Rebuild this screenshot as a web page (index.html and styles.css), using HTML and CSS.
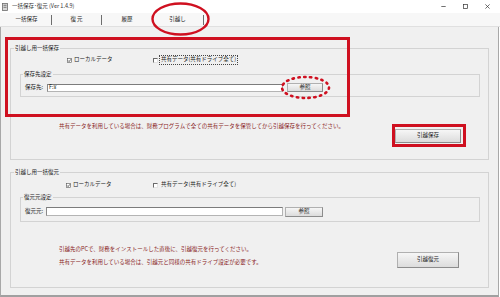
FILE: index.html
```html
<!DOCTYPE html>
<html lang="ja">
<head>
<meta charset="utf-8">
<title>一括保存･復元</title>
<link rel="stylesheet" href="styles.css">
</head>
<body>
<div class="window">
  <div class="titlebar">
    <svg class="appicon" viewBox="0 0 6 8"><rect x="0.5" y="0.5" width="5" height="7" fill="#d8d8d8" stroke="#6d6d6d" stroke-width="0.8"/><rect x="1.5" y="1.8" width="3" height="1" fill="#7a7a7a"/><rect x="1.5" y="3.8" width="3" height="1" fill="#7a7a7a"/></svg>
    <span class="title">一括保存･復元 (Ver 1.4.9)</span>
    <div class="controls">
      <span class="ctl"><svg class="ctl-icon" viewBox="0 0 5 5"><path d="M0.3 2.5H4.7" stroke="#333" stroke-width="0.7"/></svg></span>
      <span class="ctl"><svg class="ctl-icon" viewBox="0 0 5 5"><rect x="0.5" y="0.5" width="4" height="4" fill="none" stroke="#333" stroke-width="0.7"/></svg></span>
      <span class="ctl"><svg class="ctl-icon" viewBox="0 0 5 5"><path d="M0.4 0.4L4.6 4.6M4.6 0.4L0.4 4.6" stroke="#333" stroke-width="0.7"/></svg></span>
    </div>
  </div>
  <div class="tabs">
    <div class="tab tab-sep">一括保存</div>
    <div class="tab tab-sep">復&nbsp;元</div>
    <div class="tab">履歴</div>
    <div class="tab tab-sep tab-active">引越し</div>
  </div>
  <div class="content">
    <fieldset class="group group-save">
      <legend>引越し用一括保存</legend>
      <div class="checks">
        <span class="check check-local"><svg class="box" viewBox="0 0 5 5"><rect x="0.4" y="0.4" width="4.2" height="4.2" fill="#fff" stroke="#555" stroke-width="0.6"/><path d="M1.1 2.5L2.1 3.6L3.9 1.3" fill="none" stroke="#222" stroke-width="0.7"/></svg>ローカルデータ</span>
        <span class="check"><span class="box box-empty"></span><span class="focus">共有データ(共有ドライブ全て)</span></span>
      </div>
      <fieldset class="sub sub-save">
        <legend>保存先設定</legend>
        <div class="pathrow path-save">
          <span class="plabel">保存先:</span>
          <span class="input">F:¥</span>
          <span class="btn btn-ref">参照</span>
        </div>
      </fieldset>
      <div class="action action-save">
        <div class="notes notes-save">共有データを利用している場合は、財務プログラムで全ての共有データを保管してから引越保存を行ってください。</div>
        <span class="btn btn-save">引越保存</span>
      </div>
    </fieldset>

    <fieldset class="group group-restore">
      <legend>引越し用一括復元</legend>
      <div class="checks checks-restore">
        <span class="check check-local"><svg class="box" viewBox="0 0 5 5"><rect x="0.4" y="0.4" width="4.2" height="4.2" fill="#fff" stroke="#555" stroke-width="0.6"/><path d="M1.1 2.5L2.1 3.6L3.9 1.3" fill="none" stroke="#222" stroke-width="0.7"/></svg>ローカルデータ</span>
        <span class="check"><span class="box box-empty"></span><span class="nofocus">共有データ(共有ドライブ全て)</span></span>
      </div>
      <fieldset class="sub sub-restore">
        <legend>復元元設定</legend>
        <div class="pathrow path-restore">
          <span class="plabel">復元元:</span>
          <span class="input input-restore"></span>
          <span class="btn btn-ref btn-ref2">参照</span>
        </div>
      </fieldset>
      <div class="action action-restore">
        <div class="notes notes-restore">
          <p class="note-line">引越先のPCで、財務をインストールした直後に、引越復元を行ってください。</p>
          <p class="note-line">共有データを利用している場合は、引越元と同様の共有ドライブ設定が必要です。</p>
        </div>
        <span class="btn btn-restore">引越復元</span>
      </div>
    </fieldset>
  </div>

  <svg class="marks" viewBox="0 0 500 297">
    <ellipse cx="180.5" cy="19" rx="28" ry="15.5" fill="none" stroke="#cf1020" stroke-width="2.4"/>
    <rect x="6.5" y="38.5" width="342" height="77" fill="none" stroke="#cf1020" stroke-width="3"/>
    <ellipse cx="305.5" cy="87.5" rx="23.5" ry="10.5" fill="none" stroke="#cf1020" stroke-width="2.6" stroke-dasharray="1.4 4.4" stroke-linecap="round"/>
    <rect x="393.5" y="125.5" width="71" height="20" fill="none" stroke="#cf1020" stroke-width="3"/>
  </svg>
</div>
</body>
</html>
```
FILE: styles.css
```css
* { box-sizing: border-box; }
html, body { margin: 0; padding: 0; }
body {
  width: 500px;
  height: 297px;
  overflow: hidden;
  background: #fff;
  font-family: "Noto Sans CJK JP", "Noto Sans", sans-serif;
  font-size: 5.5px;
  line-height: 1;
  color: #222;
}
.window {
  position: relative;
  width: 500px;
  height: 297px;
  display: flex;
  flex-direction: column;
}
.titlebar {
  height: 13px;
  flex: none;
  display: flex;
  align-items: center;
  background: #fff;
  padding-left: 2px;
}
.appicon { width: 6px; height: 8px; display: block; }
.title { margin-left: 4px; color: #333; }
.controls { margin-left: auto; margin-right: 2px; display: flex; }
.ctl {
  width: 22px;
  height: 13px;
  display: flex;
  align-items: center;
  justify-content: center;
}
.ctl-icon { width: 5px; height: 5px; display: block; }

.tabs {
  height: 14px;
  flex: none;
  display: flex;
  align-items: center;
  padding-left: 2px;
  background: #f7f7f7;
  border-bottom: 1px solid #e0e0e0;
}
.tab {
  width: 50px;
  height: 10px;
  display: flex;
  align-items: center;
  justify-content: center;
  color: #222;
  white-space: pre;
}
.tab-sep { border-right: 1px solid #6e6e6e; }
.tab-active { width: 52px; }

.content {
  flex: 1;
  background: #f0f0f0;
  border-left: 1px solid #a8a8a8;
  border-right: 1px solid #a8a8a8;
  border-bottom: 2px solid #a0a0a0;
  margin-right: 1px;
  padding: 18px 0 0 9px;
}

.group {
  margin: 0;
  width: 479px;
  min-width: 0;
  border: 1px solid #d3d3d3;
  padding: 0 7px 16px 9px;
}
.group legend {
  margin-left: -6px;
  padding: 0 1px;
  height: 6px;
  line-height: 6px;
  color: #222;
}
.group-restore { margin-top: 9px; padding-bottom: 18px; }

.checks {
  display: flex;
  align-items: center;
  height: 8px;
  margin-top: 5px;
  padding-left: 47px;
}
.checks-restore { margin-top: 6px; padding-left: 46px; }
.check { display: flex; align-items: center; gap: 2px; white-space: nowrap; }
.check-local { width: 86px; }
.checks-restore .check-local { width: 87px; }
.box { width: 5px; height: 5px; display: block; flex: none; }
.box-empty {
  background: #fff;
  border-top: 1px solid #6a6a6a;
  border-left: 1px solid #6a6a6a;
  border-bottom: 1px solid #e4e4e4;
  border-right: 1px solid #e4e4e4;
}
.focus {
  outline: 1px dotted #444;
  padding: 1px 1px;
}
.nofocus { padding: 1px 1px; }

.sub {
  margin: 7px 0 0 0;
  width: 460px;
  min-width: 0;
  border: 1px solid #d3d3d3;
  padding: 0 4px 4px 4px;
}
.sub legend {
  margin-left: -2px;
  padding: 0 1px;
  height: 6px;
  line-height: 6px;
}
.sub-restore { margin-top: 5px; padding-bottom: 5px; }

.pathrow {
  display: flex;
  align-items: center;
  height: 9px;
  margin-top: 6px;
}
.path-restore { margin-top: 7px; }
.plabel { width: 22px; flex: none; }
.input {
  width: 236px;
  height: 8px;
  flex: none;
  display: flex;
  align-items: center;
  padding-left: 1px;
  background: #fff;
  border: 1px solid #b4b4b4;
  border-top-color: #7c7c7c;
  border-left-color: #8a8a8a;
  color: #111;
}
.input-restore { width: 237px; height: 9px; margin-left: -1px; }

.btn {
  display: flex;
  align-items: center;
  justify-content: center;
  flex: none;
  background: linear-gradient(#f6f6f6, #dcdcdc);
  border: 1px solid #b0b0b0;
  border-right-color: #8c8c8c;
  border-bottom-color: #8c8c8c;
  color: #222;
}
.btn-ref { margin-left: 4px; width: 36px; height: 9px; }
.btn-ref2 { margin-left: 2px; width: 38px; height: 10px; }

.action {
  display: flex;
  align-items: flex-start;
  padding-left: 39px;
}
.action-save { margin-top: 26px; }
.action-restore { margin-top: 21px; }
.notes { flex: 1; color: #8a1e1e; white-space: nowrap; }
.notes-save { line-height: 6px; }
.notes-restore { line-height: 13px; }
.note-line { margin: 0; }
.btn-save { width: 66px; height: 14px; margin-top: 6px; margin-right: 20px; }
.btn-restore { width: 62px; height: 16px; margin-top: 9px; margin-right: 22px; }

.marks {
  position: absolute;
  left: 0;
  top: 0;
  width: 500px;
  height: 297px;
  pointer-events: none;
}
```
